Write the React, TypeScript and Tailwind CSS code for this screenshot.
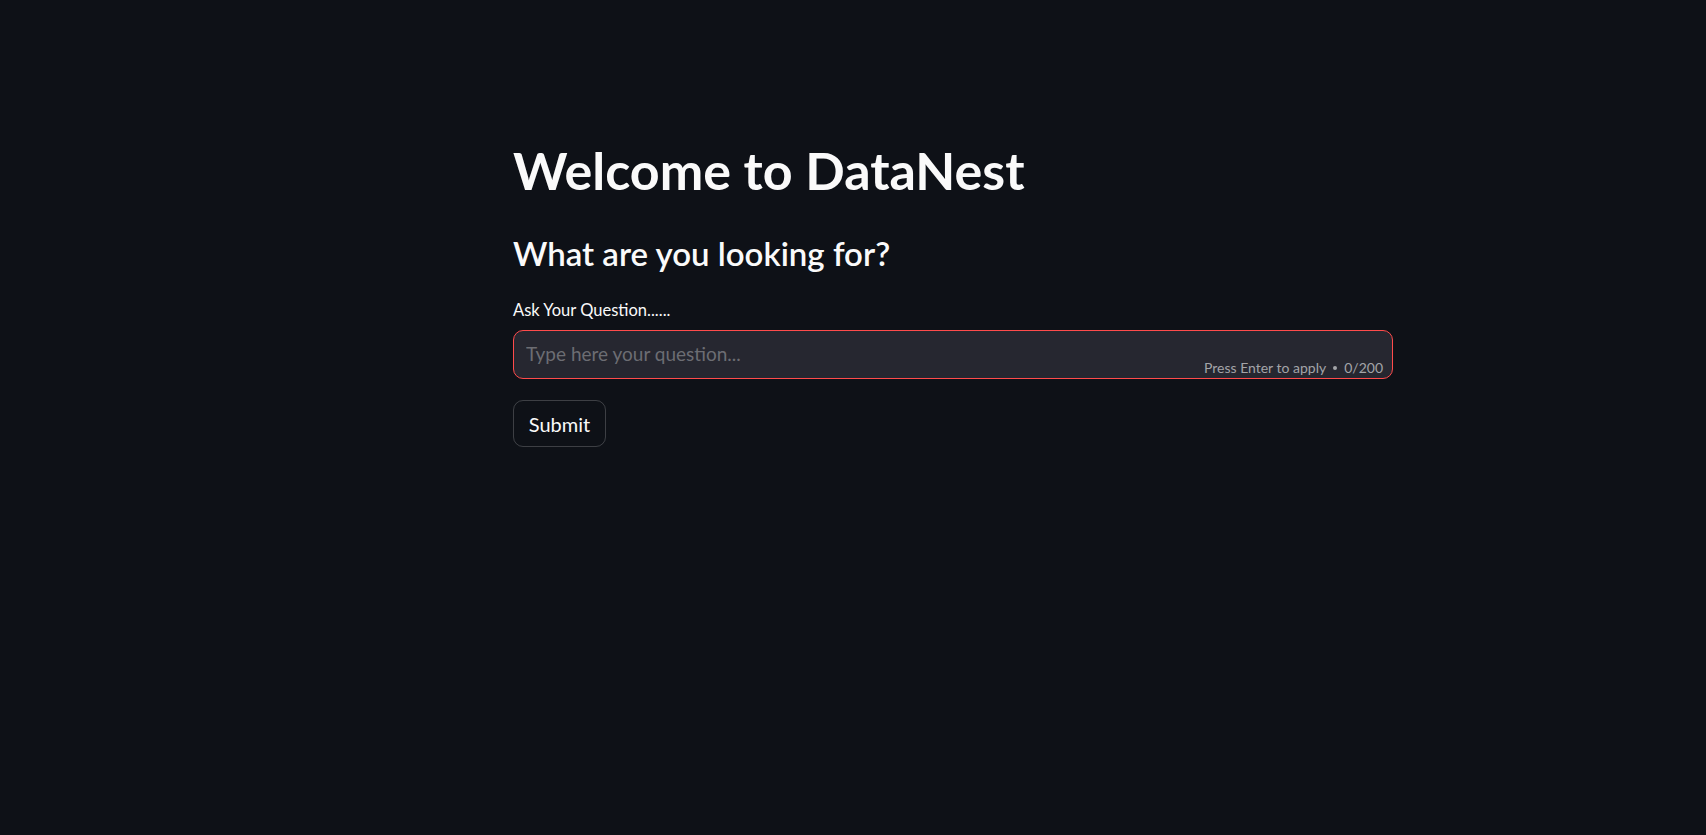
import React from 'react';

export default function App() {
  return (
    <div
      className="min-h-[835px] w-full bg-[#0e1117] text-[#fafafa]"
      style={{ fontFamily: '"Lato", "Noto Sans", sans-serif' }}
    >
      <div className="pl-[513px] pt-[139px]">
        <div className="w-[880px] flex flex-col">
          <h1 className="text-[52px] font-bold leading-[62px]">Welcome to DataNest</h1>
          <h3 className="mt-[32px] text-[33px] font-semibold leading-[40px]">What are you looking for?</h3>

          <label className="mt-[27px] text-[16.5px] leading-[20px]">Ask Your Question......</label>
          <div className="mt-[10px] relative h-[49px] rounded-[10px] border border-[#ff4b4b] bg-[#262730] flex items-center">
            <input
              className="w-full bg-transparent px-[12px] text-[19px] text-[#fafafa] outline-none placeholder:text-[#6c6d73]"
              placeholder="Type here your question..."
            />
            <div className="absolute right-[9px] bottom-[1px] text-[14px] leading-[18px] text-[#a3a4a8] flex items-center gap-[7px]">
              <span>Press Enter to apply</span>
              <span className="w-[4px] h-[4px] rounded-full bg-[#a3a4a8]"></span>
              <span>0/200</span>
            </div>
          </div>

          <div className="mt-[21px]">
            <button className="h-[47px] w-[93px] rounded-[10px] border border-[#fafafa]/20 bg-transparent text-[20px] text-[#fafafa]">
              Submit
            </button>
          </div>
        </div>
      </div>
    </div>
  );
}
